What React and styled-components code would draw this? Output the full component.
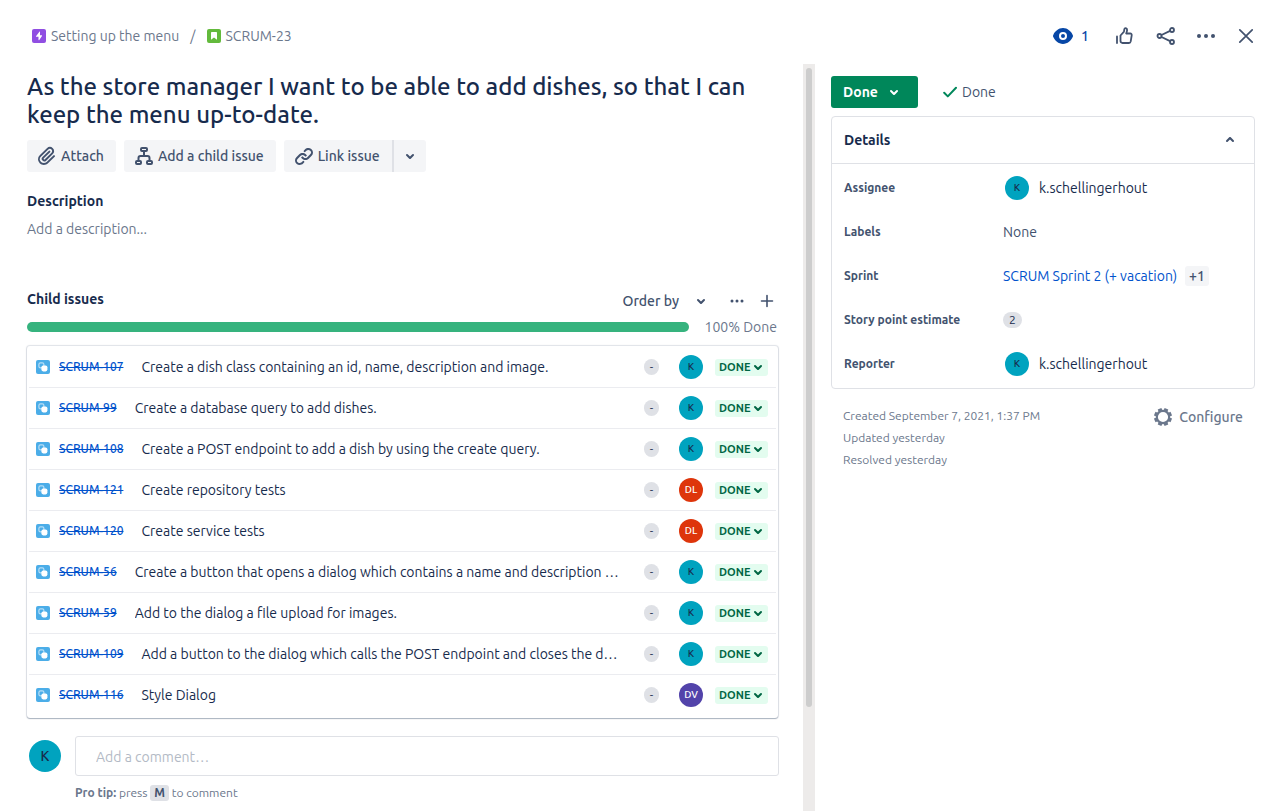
import React from "react";
import styled, { createGlobalStyle } from "styled-components";

const c = {
  ink: "#172b4d",
  text: "#42526e",
  muted: "#6b778c",
  faint: "#b3bac5",
  line: "#dfe1e6",
  wash: "#f4f5f7",
  link: "#0052cc",
  teal: "#00a3bf",
};

const Global = createGlobalStyle`
  * { box-sizing: border-box; }
  body {
    margin: 0;
    background: #fff;
    color: ${c.ink};
    font: 400 14px/20px "Ubuntu", "Noto Sans", "Open Sans", sans-serif;
  }
  h1, h2, p, ul, dl, dd { margin: 0; padding: 0; }
  button { font: inherit; color: inherit; border: 0; background: none; padding: 0; cursor: pointer; }
  a { color: inherit; text-decoration: none; }
  svg { display: block; flex: none; }
`;

const Page = styled.div`
  min-height: 100vh;
  display: flex;
  flex-direction: column;
`;

const TopBar = styled.header`
  display: flex;
  justify-content: space-between;
  align-items: center;
  height: 64px;
  padding: 8px 12px 0 32px;
`;

const Crumbs = styled.nav`
  display: flex;
  align-items: center;
  gap: 11px;
  color: ${c.muted};
`;

const Crumb = styled.a`
  display: flex;
  align-items: center;
  gap: 5px;
`;

const TopActions = styled.div`
  display: flex;
  align-items: center;
  gap: 16px;
  color: ${c.text};
`;

const IconButton = styled.button`
  display: flex;
  align-items: center;
  justify-content: center;
  width: 24px;
  height: 24px;
`;

const WatchButton = styled.button`
  display: flex;
  align-items: center;
  gap: 8px;
  margin-right: 9px;
  color: #0747a6;
  font-weight: 500;
`;

const Body = styled.div`
  flex: 1;
  display: grid;
  grid-template-columns: minmax(0, 803fr) 12px minmax(0, 455fr);
`;

const Main = styled.main`
  padding: 9px 24px 8px 27px;
`;

const Rail = styled.div`
  background: #edebea;
  padding: 4px 3px 104px;
  display: flex;
`;

const Thumb = styled.div`
  flex: 1;
  border-radius: 3px;
  background: #cdcdcd;
`;

const Title = styled.h1`
  font-size: 24px;
  line-height: 28px;
  font-weight: 500;
`;

const ButtonRow = styled.div`
  display: flex;
  gap: 8px;
  margin-top: 11px;
`;

const SoftButton = styled.button`
  display: flex;
  align-items: center;
  gap: 2px;
  height: 32px;
  padding: 0 12px 0 8px;
  border-radius: 3px;
  background: ${c.wash};
  color: ${c.text};
  font-weight: 500;
`;

const Split = styled.div`
  display: flex;
  ${SoftButton}:first-child { border-radius: 3px 0 0 3px; }
  ${SoftButton}:last-child {
    padding: 0 4px;
    border-left: 2px solid ${c.line};
    border-radius: 0 3px 3px 0;
  }
`;

const SectionTitle = styled.h2`
  font-size: 14px;
  line-height: 20px;
  font-weight: 600;
`;

const Description = styled.section`
  margin-top: 19px;
`;

const Placeholder = styled.p`
  margin-top: 8px;
  color: ${c.muted};
`;

const ChildHeader = styled.div`
  display: flex;
  align-items: flex-start;
  justify-content: space-between;
  height: 24px;
  margin-top: 50px;
`;

const ChildTools = styled.div`
  display: flex;
  align-items: center;
  gap: 6px;
  color: ${c.text};
`;

const OrderButton = styled.button`
  display: flex;
  align-items: center;
  gap: 10px;
  margin-right: 6px;
  font-weight: 500;
`;

const ProgressRow = styled.div`
  display: flex;
  align-items: center;
  gap: 16px;
  margin-top: 4px;
  padding-right: 2px;
  color: ${c.muted};
`;

const Progress = styled.div`
  flex: 1;
  height: 10px;
  border-radius: 5px;
  background: #36b37e;
`;

const IssueList = styled.ul`
  list-style: none;
  margin: 9px 1px 0 0;
  padding: 1px 2px 2px;
  border-radius: 3px;
  box-shadow: 0 1px 1px rgba(9, 30, 66, 0.25), 0 0 1px 1px rgba(9, 30, 66, 0.13);
`;

const IssueRow = styled.li`
  display: flex;
  align-items: center;
  height: 41px;
  padding: 0 8px 0 7px;
  border-bottom: 1px solid #ebecf0;
  &:last-child { border-bottom-color: transparent; }
`;

const IssueKey = styled.a`
  margin: 0 18px 0 9px;
  color: ${c.link};
  font-size: 12px;
  font-weight: 500;
  text-decoration: line-through;
`;

const Summary = styled.a`
  flex: 1;
  min-width: 0;
  overflow: hidden;
  white-space: nowrap;
  text-overflow: ellipsis;
`;

const Estimate = styled.span`
  margin: 0 20px 0 24px;
  min-width: 15px;
  border-radius: 8px;
  background: ${c.line};
  font-size: 12px;
  line-height: 16px;
  text-align: center;
`;

const Avatar = styled.span`
  flex: none;
  width: ${(p) => p.$size || 24}px;
  height: ${(p) => p.$size || 24}px;
  border-radius: 50%;
  background: ${(p) => p.$color || c.teal};
  color: ${(p) => (p.$color ? "#fff" : c.ink)};
  font-size: ${(p) => (p.$size ? 14 : 10)}px;
  line-height: ${(p) => p.$size || 24}px;
  font-weight: 500;
  text-align: center;
`;

const StatusButton = styled.button`
  display: flex;
  align-items: center;
  justify-content: space-between;
  width: 53px;
  height: 17px;
  margin-left: 12px;
  padding: 0 5px 0 4px;
  border-radius: 3px;
  background: #e3fcef;
  color: #006644;
  font-size: 11px;
  font-weight: 700;
`;

const CommentForm = styled.form`
  display: grid;
  grid-template-columns: 32px minmax(0, 1fr);
  gap: 7px 14px;
  align-items: center;
  margin-top: 18px;
  padding-left: 2px;
`;

const CommentInput = styled.input`
  height: 40px;
  padding: 1px 20px 0;
  border: 1px solid ${c.line};
  border-radius: 3px;
  font: inherit;
  color: ${c.ink};
  &::placeholder { color: ${c.faint}; opacity: 1; }
`;

const Tip = styled.p`
  grid-column: 2;
  color: ${c.muted};
  font-size: 12px;
  strong { font-weight: 600; }
  kbd {
    display: inline-block;
    padding: 0 4px;
    border-radius: 3px;
    background: ${c.line};
    color: ${c.text};
    font: inherit;
    font-weight: 700;
    line-height: 16px;
  }
`;

const Side = styled.aside`
  padding: 12px 15px 0 16px;
`;

const StatusLine = styled.div`
  display: flex;
  align-items: center;
  gap: 25px;
  color: ${c.text};
`;

const DoneButton = styled.button`
  display: flex;
  align-items: center;
  justify-content: space-between;
  width: 87px;
  height: 32px;
  padding: 0 12px;
  border-radius: 3px;
  background: #00875a;
  color: #fff;
  font-weight: 700;
`;

const Resolution = styled.span`
  display: flex;
  align-items: center;
  gap: 5px;
`;

const Card = styled.section`
  margin-top: 8px;
  border: 1px solid ${c.line};
  border-radius: 4px;
`;

const CardHeader = styled.div`
  display: flex;
  align-items: center;
  justify-content: space-between;
  height: 47px;
  padding: 0 12px;
  border-bottom: 1px solid ${c.line};
  button { color: ${c.text}; }
`;

const Fields = styled.dl`
  padding: 2px 12px;
`;

const Field = styled.div`
  display: grid;
  grid-template-columns: 159px minmax(0, 1fr);
  align-items: center;
  height: 44px;
  dt { color: ${c.text}; font-size: 12px; font-weight: 600; }
  dd { display: flex; align-items: center; color: ${c.text}; }
`;

const Person = styled.span`
  display: flex;
  align-items: center;
  gap: 10px;
  padding-left: 2px;
  color: ${c.ink};
`;

const SprintLink = styled.a`
  color: ${c.link};
`;

const More = styled.span`
  margin-left: 8px;
  padding: 0 4px;
  border-radius: 3px;
  background: ${c.wash};
  font-weight: 500;
`;

const Points = styled.span`
  padding: 0 6px;
  border-radius: 8px;
  background: ${c.line};
  color: ${c.ink};
  font-size: 12px;
  line-height: 16px;
`;

const Footer = styled.footer`
  display: flex;
  align-items: flex-start;
  justify-content: space-between;
  padding: 16px 12px;
  color: ${c.muted};
  p { font-size: 12px; line-height: 22px; }
`;

const ConfigureButton = styled.button`
  display: flex;
  align-items: center;
  gap: 6px;
  height: 24px;
  font-weight: 500;
`;

const Glyph = ({ size = 24, box = 24, children, ...rest }) => (
  <svg width={size} height={size} viewBox={`0 0 ${box} ${box}`} fill="currentColor" aria-hidden="true" {...rest}>
    {children}
  </svg>
);

const Chevron = ({ size = 24, up }) => (
  <Glyph size={size} box={size}>
    <path
      transform={`translate(${(size - 24) / 2} ${(size - 24) / 2})${up ? " rotate(180 12 12)" : ""}`}
      d="M8.292 10.293a1.009 1.009 0 000 1.419l2.939 2.965c.218.215.5.322.779.322s.556-.107.769-.322l2.93-2.955a1.01 1.01 0 000-1.419.987.987 0 00-1.406 0l-2.298 2.317-2.307-2.327a.99.99 0 00-1.406 0z"
    />
  </Glyph>
);

const EpicIcon = () => (
  <Glyph size={14} box={14}>
    <rect width="14" height="14" rx="2" fill="#904ee2" />
    <path fill="#fff" d="M7.6 2.6 4 7.2c-.2.3 0 .6.3.6h2.2v3c0 .5.5.6.8.2L10 6.9c.2-.3 0-.6-.3-.6H8V2.8c0-.3-.2-.4-.4-.2z" />
  </Glyph>
);

const StoryIcon = () => (
  <Glyph size={14} box={14}>
    <rect width="14" height="14" rx="2" fill="#63ba3c" />
    <path fill="#fff" d="M4.7 3h4.6c.4 0 .7.3.7.7v7.1L7 8.4l-3 2.4V3.7c0-.4.3-.7.7-.7z" />
  </Glyph>
);

const SubtaskIcon = () => (
  <Glyph size={14} box={14}>
    <rect width="14" height="14" rx="2" fill="#4bade8" />
    <rect x="2.9" y="2.9" width="5" height="5" rx="1.6" fill="none" stroke="#b7def6" strokeWidth="1.2" />
    <rect x="5.4" y="5.4" width="6" height="6" rx="1.8" fill="#fff" />
  </Glyph>
);

const EyeIcon = () => (
  <Glyph size={20} box={20}>
    <path d="M10 2C5.4 2 1.8 5.4.3 8.9c-.4.8-.4 1.5 0 2.2C1.8 14.6 5.4 18 10 18s8.2-3.4 9.7-6.9c.4-.8.4-1.5 0-2.2C18.2 5.4 14.6 2 10 2z" />
    <circle cx="10" cy="10" r="3" fill="none" stroke="#fff" strokeWidth="2" />
  </Glyph>
);

const ThumbIcon = () => (
  <Glyph fill="none" stroke="currentColor" strokeWidth="1.8" strokeLinecap="round" strokeLinejoin="round">
    <path d="M3 12.500v6.500M6.500 11.500l3.300-3.600c.4-.5.3-2.700.7-3.200.8-1 2.800-.5 2.600 1.400-.1 1.300-.6 2.500-.9 3.400h4c1.100 0 1.700.8 1.500 1.800l-1 6.100c-.2 1-.8 1.600-1.700 1.600h-6.500c-1.200 0-2-.8-2-2z" />
  </Glyph>
);

const ShareIcon = () => (
  <Glyph fill="none" stroke="currentColor" strokeWidth="1.8">
    <circle cx="5.5" cy="12" r="2" />
    <circle cx="18" cy="6" r="2" />
    <circle cx="18" cy="18" r="2" />
    <path d="m7.500 11 8.600-4.100M7.500 13l8.600 4.100" />
  </Glyph>
);

const DotsIcon = ({ r = 2, step = 7 }) => (
  <Glyph>
    <circle cx={12 - step} cy="12" r={r} />
    <circle cx="12" cy="12" r={r} />
    <circle cx={12 + step} cy="12" r={r} />
  </Glyph>
);

const CloseIcon = () => (
  <Glyph fill="none" stroke="currentColor" strokeWidth="1.7" strokeLinecap="round">
    <path d="m5.800 5.800 12.400 12.400M18.200 5.800 5.800 18.200" />
  </Glyph>
);

const PlusIcon = () => (
  <Glyph fill="none" stroke="currentColor" strokeWidth="1.6" strokeLinecap="round">
    <path d="M12 6.500v11M6.500 12h11" />
  </Glyph>
);

const AttachIcon = () => (
  <Glyph>
    <path d="M11.643 17.965c-1.53 1.495-4.016 1.496-5.542.004a3.773 3.773 0 01.002-5.412l7.147-6.985a2.316 2.316 0 013.233-.003c.893.873.895 2.282.004 3.153l-6.703 6.55a.653.653 0 01-.914-.008.62.62 0 010-.902l6.229-6.087a.941.941 0 000-1.353.995.995 0 00-1.384 0l-6.23 6.087a2.502 2.502 0 000 3.607 2.643 2.643 0 003.683.009l6.703-6.55a4.074 4.074 0 00-.003-5.859 4.306 4.306 0 00-6.002.003l-7.148 6.985a5.655 5.655 0 00-.001 8.118c2.29 2.237 6.015 2.238 8.308-.004l6.682-6.53a.942.942 0 000-1.353.995.995 0 00-1.384 0l-6.68 6.53z" />
  </Glyph>
);

const ChildIcon = () => (
  <Glyph fill="none" stroke="currentColor" strokeWidth="2" strokeLinejoin="round">
    <rect x="9" y="4" width="6" height="3" rx="1" />
    <rect x="4" y="17" width="5" height="3" rx="1" />
    <rect x="15" y="17" width="5" height="3" rx="1" />
    <path d="M12 7v5M6.500 17v-3c0-1.100.9-2 2-2h7c1.100 0 2 .9 2 2v3" />
  </Glyph>
);

const LinkIcon = () => (
  <Glyph>
    <path d="M12.856 5.457l-.937.92a1.002 1.002 0 000 1.437 1.047 1.047 0 001.463 0l.984-.966c.967-.95 2.542-1.135 3.602-.288a2.54 2.54 0 01.203 3.81l-2.903 2.852a2.646 2.646 0 01-3.696 0l-1.11-1.09L9 13.57l1.108 1.089c1.822 1.788 4.802 1.788 6.622 0l2.905-2.852a4.558 4.558 0 00-.357-6.82c-1.893-1.517-4.695-1.226-6.422.47" />
    <path d="M11.144 19.543l.937-.92a1.002 1.002 0 000-1.437 1.047 1.047 0 00-1.462 0l-.985.966c-.967.95-2.542 1.135-3.602.288a2.54 2.54 0 01-.203-3.81l2.903-2.852a2.646 2.646 0 013.696 0l1.11 1.09L15 11.43l-1.108-1.089c-1.822-1.788-4.802-1.788-6.622 0l-2.905 2.852a4.558 4.558 0 00.357 6.82c1.893 1.517 4.695 1.226 6.422-.47" />
  </Glyph>
);

const CheckIcon = () => (
  <Glyph size={14} box={14} fill="none" stroke="#00875a" strokeWidth="2" strokeLinecap="round" strokeLinejoin="round">
    <path d="M1.200 7.800 4.800 11.400 13 2.800" />
  </Glyph>
);

const GearIcon = () => (
  <Glyph size={20} box={20} fill="none" stroke="currentColor">
    <circle cx="10" cy="10" r="6.200" strokeWidth="2.200" />
    <g strokeWidth="4">
      {[22.5, 67.5, 112.5, 157.5, 202.5, 247.5, 292.5, 337.5].map((a) => (
        <path key={a} d="M10 3.400V1" transform={`rotate(${a} 10 10)`} />
      ))}
    </g>
  </Glyph>
);

const people = {
  K: {},
  DL: { $color: "#de350b" },
  DV: { $color: "#5243aa" },
};

const issues = [
  ["SCRUM-107", "Create a dish class containing an id, name, description and image.", "K"],
  ["SCRUM-99", "Create a database query to add dishes.", "K"],
  ["SCRUM-108", "Create a POST endpoint to add a dish by using the create query.", "K"],
  ["SCRUM-121", "Create repository tests", "DL"],
  ["SCRUM-120", "Create service tests", "DL"],
  ["SCRUM-56", "Create a button that opens a dialog which contains a name and description field.", "K"],
  ["SCRUM-59", "Add to the dialog a file upload for images.", "K"],
  ["SCRUM-109", "Add a button to the dialog which calls the POST endpoint and closes the dialog.", "K"],
  ["SCRUM-116", "Style Dialog", "DV"],
];

const User = () => (
  <Person>
    <Avatar>K</Avatar>
    k.schellingerhout
  </Person>
);

export default function App() {
  return (
    <Page>
      <Global />
      <TopBar>
        <Crumbs aria-label="Breadcrumbs">
          <Crumb href="#epic"><EpicIcon />Setting up the menu</Crumb>
          <span>/</span>
          <Crumb href="#story"><StoryIcon />SCRUM-23</Crumb>
        </Crumbs>
        <TopActions>
          <WatchButton aria-label="Watchers: 1"><EyeIcon />1</WatchButton>
          <IconButton aria-label="Vote"><ThumbIcon /></IconButton>
          <IconButton aria-label="Share"><ShareIcon /></IconButton>
          <IconButton aria-label="Actions"><DotsIcon /></IconButton>
          <IconButton aria-label="Close"><CloseIcon /></IconButton>
        </TopActions>
      </TopBar>
      <Body>
        <Main>
          <Title>As the store manager I want to be able to add dishes, so that I can keep the menu up-to-date.</Title>
          <ButtonRow>
            <SoftButton><AttachIcon />Attach</SoftButton>
            <SoftButton><ChildIcon />Add a child issue</SoftButton>
            <Split>
              <SoftButton><LinkIcon />Link issue</SoftButton>
              <SoftButton aria-label="More link options"><Chevron /></SoftButton>
            </Split>
          </ButtonRow>
          <Description>
            <SectionTitle>Description</SectionTitle>
            <Placeholder>Add a description...</Placeholder>
          </Description>
          <ChildHeader>
            <SectionTitle>Child issues</SectionTitle>
            <ChildTools>
              <OrderButton>Order by<Chevron /></OrderButton>
              <IconButton aria-label="More"><DotsIcon r={1.5} step={5} /></IconButton>
              <IconButton aria-label="Create child issue"><PlusIcon /></IconButton>
            </ChildTools>
          </ChildHeader>
          <ProgressRow>
            <Progress role="progressbar" aria-valuenow={100} aria-label="Done" />
            100% Done
          </ProgressRow>
          <IssueList>
            {issues.map(([key, summary, who]) => (
              <IssueRow key={key}>
                <SubtaskIcon />
                <IssueKey href={`#${key}`}>{key}</IssueKey>
                <Summary href={`#${key}`}>{summary}</Summary>
                <Estimate>-</Estimate>
                <Avatar {...people[who]}>{who}</Avatar>
                <StatusButton>DONE<Chevron size={10} /></StatusButton>
              </IssueRow>
            ))}
          </IssueList>
          <CommentForm>
            <Avatar $size={32}>K</Avatar>
            <CommentInput aria-label="Comment" placeholder="Add a comment…" />
            <Tip><strong>Pro tip:</strong> press <kbd>M</kbd> to comment</Tip>
          </CommentForm>
        </Main>
        <Rail><Thumb /></Rail>
        <Side>
          <StatusLine>
            <DoneButton>Done<Chevron /></DoneButton>
            <Resolution><CheckIcon />Done</Resolution>
          </StatusLine>
          <Card>
            <CardHeader>
              <SectionTitle>Details</SectionTitle>
              <IconButton aria-label="Collapse details"><Chevron up /></IconButton>
            </CardHeader>
            <Fields>
              <Field><dt>Assignee</dt><dd><User /></dd></Field>
              <Field><dt>Labels</dt><dd>None</dd></Field>
              <Field>
                <dt>Sprint</dt>
                <dd><SprintLink href="#sprint">SCRUM Sprint 2 (+ vacation)</SprintLink><More>+1</More></dd>
              </Field>
              <Field><dt>Story point estimate</dt><dd><Points>2</Points></dd></Field>
              <Field><dt>Reporter</dt><dd><User /></dd></Field>
            </Fields>
          </Card>
          <Footer>
            <div>
              <p>Created September 7, 2021, 1:37 PM</p>
              <p>Updated yesterday</p>
              <p>Resolved yesterday</p>
            </div>
            <ConfigureButton><GearIcon />Configure</ConfigureButton>
          </Footer>
        </Side>
      </Body>
    </Page>
  );
}
